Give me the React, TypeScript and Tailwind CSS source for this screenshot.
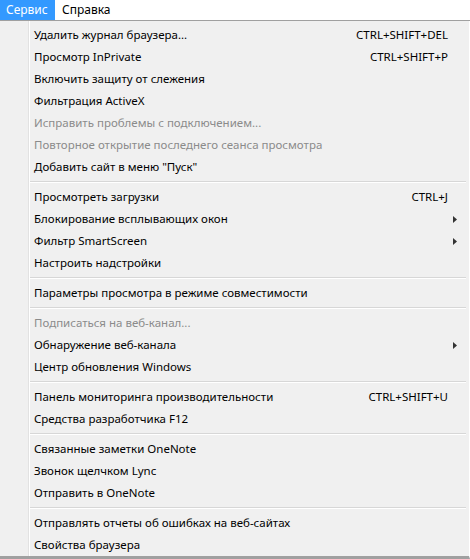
import React from "react";

type Item = { label: string; shortcut?: string; disabled?: boolean; sub?: boolean };
const groups: Item[][] = [
  [
    { label: "Удалить журнал браузера...", shortcut: "CTRL+SHIFT+DEL" },
    { label: "Просмотр InPrivate", shortcut: "CTRL+SHIFT+P" },
    { label: "Включить защиту от слежения" },
    { label: "Фильтрация ActiveX" },
    { label: "Исправить проблемы с подключением...", disabled: true },
    { label: "Повторное открытие последнего сеанса просмотра", disabled: true },
    { label: "Добавить сайт в меню \"Пуск\"" },
  ],
  [
    { label: "Просмотреть загрузки", shortcut: "CTRL+J" },
    { label: "Блокирование всплывающих окон", sub: true },
    { label: "Фильтр SmartScreen", sub: true },
    { label: "Настроить надстройки" },
  ],
  [{ label: "Параметры просмотра в режиме совместимости" }],
  [
    { label: "Подписаться на веб-канал...", disabled: true },
    { label: "Обнаружение веб-канала", sub: true },
    { label: "Центр обновления Windows" },
  ],
  [
    { label: "Панель мониторинга производительности", shortcut: "CTRL+SHIFT+U" },
    { label: "Средства разработчика F12" },
  ],
  [
    { label: "Связанные заметки OneNote" },
    { label: "Звонок щелчком Lync" },
    { label: "Отправить в OneNote" },
  ],
  [
    { label: "Отправлять отчеты об ошибках на веб-сайтах" },
    { label: "Свойства браузера" },
  ],
];

function Row({ it }: { it: Item }) {
  return (
    <div className={`flex items-center h-[22px] pl-[34px] pr-[21px] ${it.disabled ? "text-[#8b8b8b]" : "text-black"}`}>
      <span className="flex-1 whitespace-nowrap">{it.label}</span>
      {it.shortcut && <span className="whitespace-nowrap">{it.shortcut}</span>}
      {it.sub && (
        <svg width="4" height="7" viewBox="0 0 4 7" className="mr-[-9px]">
          <path d="M0 0 L4 3.5 L0 7 Z" fill="#333" />
        </svg>
      )}
    </div>
  );
}

export default function App() {
  return (
    <div
      className="w-[470px] h-[559px] flex flex-col bg-[#f0f0f0] text-[11.5px] overflow-hidden"
      style={{ fontFamily: '"Noto Sans", "Open Sans", sans-serif' }}
    >
      <div className="h-[21px] bg-white flex items-stretch border-b border-[#a0a0a0] shrink-0 text-[12px]">
        <div className="bg-[#3399ff] text-white w-[55px] h-[20px] flex items-center pl-[6px]">Сервис</div>
        <div className="h-[20px] flex items-center pl-[7px]">Справка</div>
      </div>
      <div className="relative flex-1 pt-[3px] border-b-[3px] border-[#a0a0a0] border-r border-r-white">
        <div className="absolute left-[28px] top-0 bottom-0 w-px bg-[#e2e2e2]" />
        <div className="absolute left-[29px] top-0 bottom-0 w-px bg-white" />
        {groups.map((g, gi) => (
          <div key={gi}>
            {gi > 0 && (
              <div className="h-[8px] flex flex-col justify-center pl-[30px] pr-[3px]">
                <div className="h-px bg-[#d7d7d7]" />
                <div className="h-px bg-white" />
              </div>
            )}
            {g.map((it, i) => (
              <Row key={i} it={it} />
            ))}
          </div>
        ))}
      </div>
    </div>
  );
}
